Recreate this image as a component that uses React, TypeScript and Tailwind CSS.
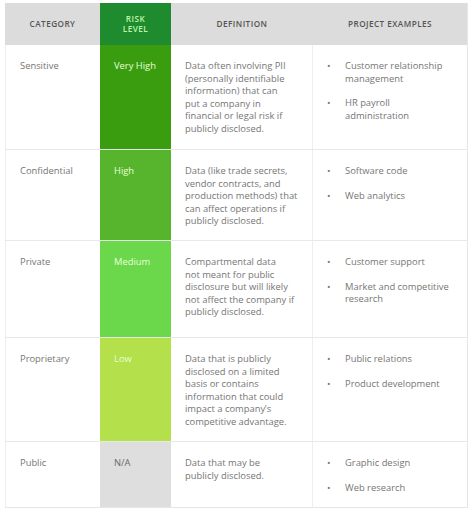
import React from "react";

type Row = {
  cat: string;
  risk: string;
  riskBg: string;
  def: string[];
  ex: string[][];
  h: string;
};

const rows: Row[] = [
  {
    cat: "Sensitive",
    risk: "Very High",
    riskBg: "bg-[#3a9d10]",
    def: [
      "Data often involving PII",
      "(personally identifiable",
      "information) that can",
      "put a company in",
      "financial or legal risk if",
      "publicly disclosed.",
    ],
    ex: [["Customer relationship", "management"], ["HR payroll", "administration"]],
    h: "h-[104px]",
  },
  {
    cat: "Confidential",
    risk: "High",
    riskBg: "bg-[#56b52c]",
    def: [
      "Data (like trade secrets,",
      "vendor contracts, and",
      "production methods) that",
      "can affect operations if",
      "publicly disclosed.",
    ],
    ex: [["Software code"], ["Web analytics"]],
    h: "h-[91px]",
  },
  {
    cat: "Private",
    risk: "Medium",
    riskBg: "bg-[#6ad84a]",
    def: [
      "Compartmental data",
      "not meant for public",
      "disclosure but will likely",
      "not affect the company if",
      "publicly disclosed.",
    ],
    ex: [["Customer support"], ["Market and competitive", "research"]],
    h: "h-[97px]",
  },
  {
    cat: "Proprietary",
    risk: "Low",
    riskBg: "bg-[#b3e04b]",
    def: [
      "Data that is publicly",
      "disclosed on a limited",
      "basis or contains",
      "information that could",
      "impact a company\u2019s",
      "competitive advantage.",
    ],
    ex: [["Public relations"], ["Product development"]],
    h: "h-[104px]",
  },
  {
    cat: "Public",
    risk: "N/A",
    riskBg: "bg-[#dedede]",
    def: ["Data that may be", "publicly disclosed."],
    ex: [["Graphic design"], ["Web research"]],
    h: "h-[66px]",
  },
];

export default function App() {
  return (
    <div className="w-[474px] h-[512px] bg-white pt-[3px] pl-[5px]" style={{ fontFamily: '"Open Sans", "Liberation Sans", sans-serif' }}>
      <div className="w-[463px] border-r border-b border-[#e6e6e6]">
        <div className="grid grid-cols-[95px_71px_142px_1fr] h-[42px] text-[8.2px] font-semibold tracking-[0.45px] text-[#555555]">
          <div className="bg-[#dcdcdc] flex items-center justify-center">CATEGORY</div>
          <div className="bg-[#1e8b2e] flex items-center justify-center text-center leading-[10px] text-[#bff5a8]">
            RISK
            <br />
            LEVEL
          </div>
          <div className="bg-[#dcdcdc] flex items-center justify-center">DEFINITION</div>
          <div className="bg-[#dcdcdc] flex items-center justify-center">PROJECT EXAMPLES</div>
        </div>
        {rows.map((r, i) => (
          <div
            key={i}
            className={`grid grid-cols-[95px_71px_142px_1fr] ${r.h} text-[9.4px] leading-[12.5px] text-[#767676] ${i > 0 ? "border-t border-[#e8e8e8]" : ""}`}
          >
            <div className="pl-[14px] pt-[15px] border-l border-[#eeeeee]">{r.cat}</div>
            <div className={`${r.riskBg} pl-[14px] pt-[15px] ${r.risk === "N/A" ? "text-[#6a6a6a]" : "text-[#e8ffd8]"}`}>{r.risk}</div>
            <div className="pl-[14px] pt-[15px] whitespace-nowrap border-r border-[#eeeeee]">
              {r.def.map((l, j) => (
                <div key={j}>{l}</div>
              ))}
            </div>
            <div className="pl-[14px] pt-[15px] flex flex-col gap-[12px] whitespace-nowrap">
              {r.ex.map((item, j) => (
                <div key={j} className="flex">
                  <span className="w-[18px] shrink-0">•</span>
                  <div>
                    {item.map((l, k) => (
                      <div key={k}>{l}</div>
                    ))}
                  </div>
                </div>
              ))}
            </div>
          </div>
        ))}
      </div>
    </div>
  );
}
